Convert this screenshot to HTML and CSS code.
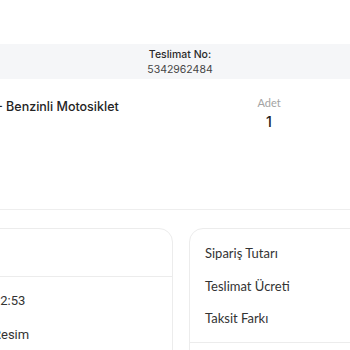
FILE: index.html
```html
<!DOCTYPE html>
<html lang="tr">
<head>
  <meta charset="UTF-8" />
  <title>Sipariş Detayı</title>
  <link rel="stylesheet" href="styles.css">
</head>
<body>
  <div class="page">
    <div class="top-space"></div>

    <div class="delivery-band">
      <div class="delivery-label">Teslimat No:</div>
      <div class="delivery-no">5342962484</div>
    </div>

    <div class="product">
      <div class="product-name">- Benzinli Motosiklet</div>
      <div class="qty">
        <div class="qty-label">Adet</div>
        <div class="qty-value">1</div>
      </div>
    </div>

    <div class="cards">
      <div class="card info-card">
        <div class="card-head">Sipariş Bilgileri</div>
        <div class="info-rows">
          <div class="info-row">
            <span class="info-label">Sipariş Tarihi</span>
            <span class="info-value">12:53</span>
          </div>
          <div class="info-row">
            <span class="info-label">Ödeme Tipi</span>
            <span class="info-value">Resim</span>
          </div>
          <div class="info-row">
            <span class="info-label">Teslimat</span>
            <span class="info-value">Adres Bilgisi</span>
          </div>
        </div>
      </div>

      <div class="card price-card">
        <div class="price-rows">
          <div class="price-row">Sipariş Tutarı</div>
          <div class="price-row">Teslimat Ücreti</div>
          <div class="price-row">Taksit Farkı</div>
        </div>
        <div class="price-total">Toplam</div>
      </div>
    </div>
  </div>
</body>
</html>
```

FILE: styles.css
```css
body {
  margin: 0;
  background: #fff;
  color: #2e2e2e;
  font-family: "Lato", "Noto Sans", sans-serif;
  overflow: hidden;
}

.page {
  margin-left: -170px;
  width: 700px;
}

.top-space {
  height: 44px;
}

.delivery-band {
  height: 35px;
  background-color: #f5f6f8;
  display: flex;
  flex-direction: column;
  align-items: center;
  justify-content: center;
  font-family: "Inter", "Lato", sans-serif;
  font-size: 10.5px;
  line-height: 15px;
}

.delivery-label {
  font-weight: 500;
  color: #2a2a2a;
}

.delivery-no {
  color: #444;
}

.product {
  display: flex;
  align-items: flex-start;
  height: 113px;
  padding-top: 17px;
  padding-left: 167px;
  border-bottom: 1px solid #eeeeee;
}

.product-name {
  width: 232px;
  margin-top: 2px;
  font-family: "Inter", "Lato", sans-serif;
  font-size: 12.5px;
  line-height: 18px;
  font-weight: 500;
  color: #242424;
}

.qty {
  width: 80px;
  display: flex;
  flex-direction: column;
  align-items: center;
  gap: 3px;
}

.qty-label {
  font-size: 11px;
  line-height: 14px;
  color: #a3a3a3;
}

.qty-value {
  font-family: "Inter", "Lato", sans-serif;
  font-size: 14px;
  line-height: 18px;
  font-weight: 500;
  color: #222;
}

.cards {
  display: flex;
  gap: 16px;
  margin-top: 18px;
  padding-left: 20px;
}

.card {
  border: 1px solid #ececec;
  border-radius: 14px;
  background: #fff;
}

.info-card {
  width: 321px;
}

.card-head {
  height: 47px;
  padding-left: 16px;
  display: flex;
  align-items: center;
  font-size: 13px;
  border-bottom: 1px solid #ececec;
}

.info-rows {
  display: flex;
  flex-direction: column;
  gap: 16px;
  padding: 15px 16px;
}

.info-row {
  display: flex;
  font-family: "Roboto", "Liberation Sans", sans-serif;
  font-size: 13px;
  line-height: 18px;
}

.info-label {
  width: 126px;
  flex-shrink: 0;
  color: #777;
}

.info-value {
  color: #333;
}

.price-card {
  width: 220px;
}

.price-rows {
  display: flex;
  flex-direction: column;
  gap: 14.5px;
  padding: 15px 15px 15px;
  border-bottom: 1px solid #ececec;
}

.price-row {
  font-size: 13px;
  line-height: 18px;
  color: #333;
}

.price-total {
  padding: 15px;
  font-size: 13px;
}
```
